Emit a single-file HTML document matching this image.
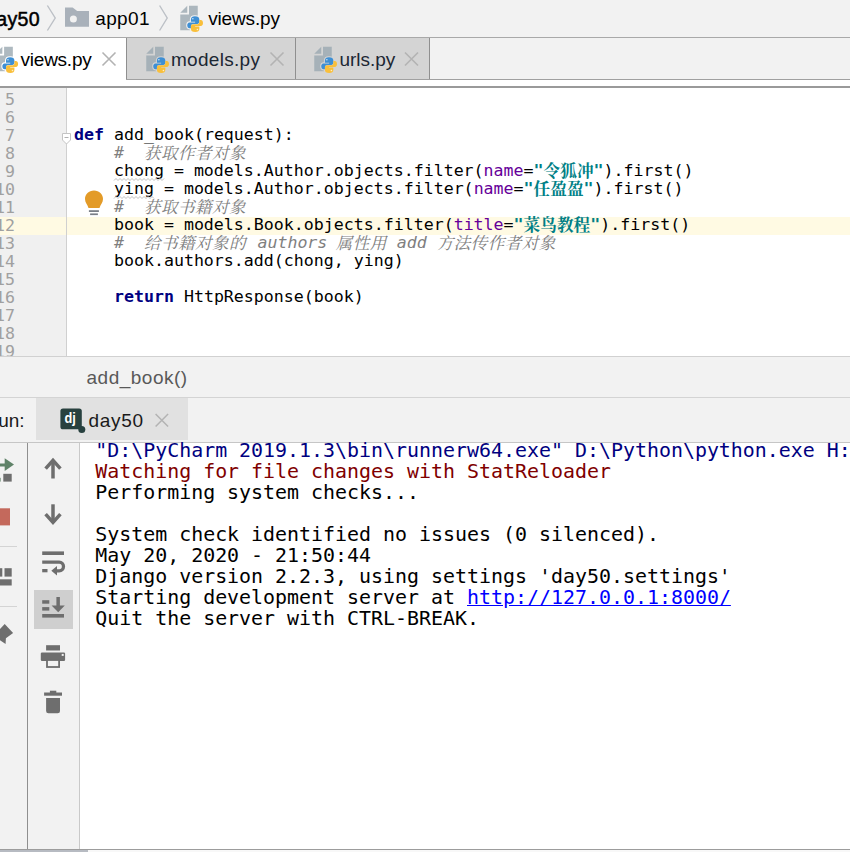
<!DOCTYPE html>
<html lang="zh">
<head>
<meta charset="utf-8">
<title>PyCharm - views.py</title>
<style>
html,body{margin:0;padding:0;}
body{width:850px;height:852px;overflow:hidden;background:#fff;position:relative;font-family:"Liberation Sans","Noto Sans CJK SC",sans-serif;color:#000;}
.abs{position:absolute;}
#nav{left:0;top:0;width:850px;height:37px;background:#f2f2f2;}
#navline{left:0;top:37px;width:850px;height:1px;background:#a9a9a9;}
.ui{font-family:"Liberation Sans","Noto Sans CJK SC",sans-serif;font-size:19px;white-space:pre;line-height:22px;color:#000;}
#tabs{left:0;top:38px;width:850px;height:48px;background:#fff;}
.tab{position:absolute;top:0;height:42px;background:#d4d4d4;border-right:1px solid #8f8f8f;border-bottom:1px solid #8f8f8f;box-sizing:border-box;}
#tabline{left:0;top:86px;width:850px;height:2px;background:#9a9a9a;}
#gutter{left:0;top:88px;width:66px;height:268px;background:#f0f0f0;border-right:1px solid #d0d0d0;}
#editor{left:67px;top:88px;width:783px;height:268px;background:#fff;}
.ln{position:absolute;left:-5px;margin-top:1.3px;width:20px;text-align:right;font-family:"DejaVu Sans Mono","Liberation Mono",monospace;font-size:16.6px;line-height:18px;height:18px;color:#a0a0a0;}
.cl{position:absolute;left:74px;height:18px;line-height:18px;font-family:"DejaVu Sans Mono","Noto Sans CJK SC",monospace;font-size:16.6px;white-space:pre;color:#000;}
.kw{color:#000080;font-weight:bold;}
.cm{color:#808080;font-style:italic;}
.cm .zh{font-family:"Noto Serif CJK SC","Noto Sans CJK SC",serif;font-style:italic;font-size:16.6px;letter-spacing:0.4px;line-height:0;position:relative;top:0.8px;}
.st{color:#007f86;font-weight:bold;}
.st .zh{font-family:"Noto Serif CJK SC","Noto Sans CJK SC",serif;font-weight:bold;font-size:16.67px;line-height:0;position:relative;top:0.5px;}
.kwarg{color:#660099;}
#caretrow{left:0;top:217px;width:850px;height:18px;background:#fffae3;}
#crumb{left:0;top:356px;width:850px;height:41px;background:#f2f2f2;border-top:1px solid #d1d1d1;box-sizing:border-box;}
#runhdr{left:0;top:397px;width:850px;height:46px;background:#f2f2f2;border-top:1px solid #d4d4d4;border-bottom:1px solid #c6c6c6;box-sizing:border-box;}
#runtab{left:36px;top:398px;width:152px;height:42.4px;background:#e1e1e1;}
#lefttb{left:0;top:443px;width:27px;height:407px;background:#f2f2f2;border-right:1px solid #8f8f8f;}
#midtb{left:28px;top:443px;width:51px;height:407px;background:#f2f2f2;border-right:1px solid #c9c9c9;}
#console{left:80px;top:443px;width:770px;height:407px;background:#fff;}
.co{position:absolute;left:95.2px;height:21px;line-height:21px;font-family:"DejaVu Sans Mono","Liberation Mono",monospace;font-size:19.93px;white-space:pre;color:#000;}
#bottomline{left:0;top:849px;width:850px;height:1px;background:#9c9c9c;}
#bottomband{left:0;top:850px;width:850px;height:2px;background:linear-gradient(to right,#b7bbc2 0,#b7bbc2 88px,#f8f8f8 88px);}
</style>
</head>
<body>
<!-- navigation bar -->
<div id="nav" class="abs"></div>
<div id="navline" class="abs"></div>
<div id="t_day50" class="abs ui" style="left:-15.1px;top:8px;font-weight:normal;-webkit-text-stroke:0.5px #000;font-size:19.6px;letter-spacing:0.35px;">day50</div>
<div id="t_app01" class="abs ui" style="left:95.2px;top:8px;letter-spacing:0.4px;">app01</div>
<div id="t_views1" class="abs ui" style="left:208.2px;top:8px;letter-spacing:-0.15px;">views.py</div>

<!-- editor tabs -->
<div id="tabs" class="abs">
  <div class="abs" style="left:126px;top:0;width:724px;height:41px;background:#f2f2f2;"></div>
  <div class="tab" style="left:126px;width:170px;border-left:1px solid #8f8f8f;"></div>
  <div class="tab" style="left:296px;width:134px;"></div>
  <div class="abs" style="left:126px;top:41px;width:724px;height:1px;background:#a0a0a0;"></div>
</div>
<div id="tabline" class="abs"></div>
<div id="t_tab1" class="abs ui" style="left:20.6px;top:49px;letter-spacing:-0.25px;">views.py</div>
<div id="t_tab2" class="abs ui" style="left:171px;top:49px;letter-spacing:0.29px;color:#1c2733;">models.py</div>
<div id="t_tab3" class="abs ui" style="left:339.4px;top:49px;color:#1c2733;">urls.py</div>

<!-- editor -->
<div id="gutter" class="abs"></div>
<div id="editor" class="abs"></div>
<div id="caretrow" class="abs"></div>
<div class="abs" style="left:66px;top:217px;width:1px;height:18px;background:#d0d0d0;"></div>

<div class="ln" style="top:90px;">5</div>
<div class="ln" style="top:108px;">6</div>
<div class="ln" style="top:126px;">7</div>
<div class="ln" style="top:144px;">8</div>
<div class="ln" style="top:162px;">9</div>
<div class="ln" style="top:180px;">10</div>
<div class="ln" style="top:198px;">11</div>
<div class="ln" style="top:216px;">12</div>
<div class="ln" style="top:234px;">13</div>
<div class="ln" style="top:252px;">14</div>
<div class="ln" style="top:270px;">15</div>
<div class="ln" style="top:288px;">16</div>
<div class="ln" style="top:306px;">17</div>
<div class="ln" style="top:324px;">18</div>
<div class="ln" style="top:342px;height:14px;overflow:hidden;">19</div>

<div class="cl" style="top:126px;"><span class="kw">def</span> add_book(request):</div>
<div class="cl" style="top:144px;">    <span class="cm">#  <span class="zh">获取作者对象</span></span></div>
<div class="cl" style="top:162px;">    chong = models.Author.objects.filter(<span class="kwarg">name</span>=<span class="st">"<span class="zh">令狐冲</span>"</span>).first()</div>
<div class="cl" style="top:180px;">    ying = models.Author.objects.filter(<span class="kwarg">name</span>=<span class="st">"<span class="zh">任盈盈</span>"</span>).first()</div>
<div class="cl" style="top:198px;">    <span class="cm">#  <span class="zh">获取书籍对象</span></span></div>
<div class="cl" style="top:216px;">    book = models.Book.objects.filter(<span class="kwarg">title</span>=<span class="st">"<span class="zh">菜鸟教程</span>"</span>).first()</div>
<div class="cl" style="top:234px;">    <span class="cm">#  <span class="zh">给书籍对象的</span> <span style="margin-left:1.5px;margin-right:-1.5px;">authors</span> <span class="zh">属性用</span> add <span class="zh">方法传作者对象</span></span></div>
<div class="cl" style="top:252px;">    book.authors.add(chong, ying)</div>
<div class="cl" style="top:288px;">    <span class="kw">return</span> HttpResponse(book)</div>

<!-- editor breadcrumb -->
<div id="crumb" class="abs"></div>
<div id="t_crumb" class="abs ui" style="left:86.5px;top:367px;letter-spacing:0.5px;color:#595959;">add_book()</div>

<!-- run tool window -->
<div id="runhdr" class="abs"></div>
<div id="runtab" class="abs"></div>
<div id="t_run" class="abs ui" style="left:-15.5px;top:410px;color:#1a1a1a;">Run:</div>
<div id="t_runtab" class="abs ui" style="left:88.5px;top:410px;letter-spacing:0.7px;color:#1a1a1a;">day50</div>

<div id="lefttb" class="abs"></div>
<div id="midtb" class="abs"></div>
<div id="console" class="abs"></div>

<div class="co" style="top:440px;color:#000080;">"D:\PyCharm 2019.1.3\bin\runnerw64.exe" D:\Python\python.exe H:/day50/manage.py runserver 8000</div>
<div class="co" style="top:461px;color:#7f0000;">Watching for file changes with StatReloader</div>
<div class="co" style="top:482px;">Performing system checks...</div>
<div class="co" style="top:524px;">System check identified no issues (0 silenced).</div>
<div class="co" style="top:545px;">May 20, 2020 - 21:50:44</div>
<div class="co" style="top:566px;">Django version 2.2.3, using settings 'day50.settings'</div>
<div class="co" style="top:587px;">Starting development server at <span style="color:#0000ff;text-decoration:underline;">http://127.0.0.1:8000/</span></div>
<div class="co" style="top:608px;">Quit the server with CTRL-BREAK.</div>


<!-- icon overlay -->
<svg class="abs" style="left:0;top:0;pointer-events:none;" width="850" height="852" viewBox="0 0 850 852">
<defs>
  <g id="pyfile">
    <polygon points="7,1 3,5 7,5" fill="#9aa7b0" fill-opacity="0.8"/>
    <path d="M8,1 H13 V15 H3 V6 H8 Z" fill="#9aa7b0" fill-opacity="0.8"/>
    <g transform="translate(7,7)">
      <g stroke="currentColor" stroke-width="1.2" stroke-linejoin="round" fill="currentColor">
        <path d="M4.4,0 C2.9,0 2.1,0.7 2.1,1.9 V3.1 H4.5 V3.5 H1.3 C0.4,3.5 0,4.3 0,5.2 C0,6.2 0.5,6.9 1.3,6.9 H2.1 V5.6 C2.1,4.8 2.8,4.4 3.5,4.4 H5.7 C6.4,4.4 6.9,3.9 6.9,3.2 V1.9 C6.9,0.7 6.1,0 4.4,0 Z"/>
        <path transform="rotate(180 4.5 4.5)" d="M4.4,0 C2.9,0 2.1,0.7 2.1,1.9 V3.1 H4.5 V3.5 H1.3 C0.4,3.5 0,4.3 0,5.2 C0,6.2 0.5,6.9 1.3,6.9 H2.1 V5.6 C2.1,4.8 2.8,4.4 3.5,4.4 H5.7 C6.4,4.4 6.9,3.9 6.9,3.2 V1.9 C6.9,0.7 6.1,0 4.4,0 Z"/>
      </g>
      <path fill="#3e8fd4" d="M4.4,0 C2.9,0 2.1,0.7 2.1,1.9 V3.1 H4.5 V3.5 H1.3 C0.4,3.5 0,4.3 0,5.2 C0,6.2 0.5,6.9 1.3,6.9 H2.1 V5.6 C2.1,4.8 2.8,4.4 3.5,4.4 H5.7 C6.4,4.4 6.9,3.9 6.9,3.2 V1.9 C6.9,0.7 6.1,0 4.4,0 Z"/>
      <path fill="#f9bf3b" transform="rotate(180 4.5 4.5)" d="M4.4,0 C2.9,0 2.1,0.7 2.1,1.9 V3.1 H4.5 V3.5 H1.3 C0.4,3.5 0,4.3 0,5.2 C0,6.2 0.5,6.9 1.3,6.9 H2.1 V5.6 C2.1,4.8 2.8,4.4 3.5,4.4 H5.7 C6.4,4.4 6.9,3.9 6.9,3.2 V1.9 C6.9,0.7 6.1,0 4.4,0 Z"/>
    </g>
    <circle cx="10.2" cy="8.4" r="0.45" fill="#cfe3f5"/>
    <circle cx="12.8" cy="14.6" r="0.45" fill="#fdeec4"/>
  </g>
  <g id="closex" stroke="#b3b3b3" stroke-width="1.6" fill="none">
    <path d="M0,0 L13,13 M13,0 L0,13"/>
  </g>
</defs>

<!-- nav bar -->
<path d="M47.4,5.5 L55.2,18 L47.4,30.5" fill="none" stroke="#bcc0c6" stroke-width="1.4"/>
<path d="M159.6,5.5 L167.2,18 L159.6,30.5" fill="none" stroke="#bcc0c6" stroke-width="1.4"/>
<path d="M65,7.4 H72.6 L77.2,10.9 H89 V26.8 H65 Z" fill="#a9b1ba"/>
<circle cx="73.4" cy="18.9" r="3.5" fill="#f2f2f2"/>
<use href="#pyfile" transform="translate(175,4) scale(1.75)" style="color:#f2f2f2"/>

<!-- tabs -->
<use href="#pyfile" transform="translate(-9.9,45) scale(1.75)" style="color:#ffffff"/>
<use href="#pyfile" transform="translate(141,45) scale(1.75)" style="color:#d4d4d4"/>
<use href="#pyfile" transform="translate(309,45) scale(1.75)" style="color:#d4d4d4"/>
<use href="#closex" transform="translate(102.5,52.5)"/>
<use href="#closex" transform="translate(270.5,52.5)"/>
<use href="#closex" transform="translate(405,52.5)"/>

<!-- fold marker -->
<path d="M62.5,133.5 H70.5 V140 L66.5,144 L62.5,140 Z" fill="#ffffff" stroke="#c4c4c4" stroke-width="1"/>
<path d="M64.5,137.5 H68.5" stroke="#b0b0b0" stroke-width="1"/>

<!-- weak warnings -->
<polyline points="114,180.5 116,178.5 118,180.5 120,178.5 122,180.5 124,178.5 126,180.5 128,178.5 130,180.5 132,178.5 134,180.5 136,178.5 138,180.5 140,178.5 142,180.5 144,178.5 146,180.5 148,178.5 150,180.5 152,178.5 154,180.5 156,178.5 158,180.5 160,178.5 162,180.5 164,178.5" fill="none" stroke="#c2c2c2" stroke-width="1"/>
<polyline points="114,198.5 116,196.5 118,198.5 120,196.5 122,198.5 124,196.5 126,198.5 128,196.5 130,198.5 132,196.5 134,198.5 136,196.5 138,198.5 140,196.5 142,198.5 144,196.5 146,198.5 148,196.5 150,198.5 152,196.5 154,198.5" fill="none" stroke="#c2c2c2" stroke-width="1"/>
<!-- bulb -->
<path d="M94,190.6 C99.2,190.6 103,194.4 103,199 C103,202.6 100.6,204.4 99.5,207.9 H88.5 C87.4,204.4 85,202.6 85,199 C85,194.4 88.8,190.6 94,190.6 Z" fill="#e39b28"/>
<rect x="88.9" y="210.2" width="10" height="1.8" fill="#7a7f87"/>
<rect x="90.1" y="213.4" width="7.8" height="1.7" fill="#7a7f87"/>

<!-- run tab -->
<rect x="60.4" y="408.4" width="21.4" height="20.9" rx="2.6" fill="#28413f"/>
<circle cx="81.8" cy="429.5" r="3.5" fill="#28413f"/>
<text x="64.6" y="422.7" textLength="11.3" lengthAdjust="spacingAndGlyphs" font-family="Liberation Sans, sans-serif" font-weight="bold" font-size="14.8" fill="#ffffff">dj</text>
<use href="#closex" transform="translate(155.6,414) scale(0.96)"/>

<!-- left toolbar -->
<g fill="#5f8268">
  <rect x="-2" y="463.5" width="7.5" height="3"/>
  <polygon points="4.7,458.2 14,464.6 4.7,471"/>
  <rect x="-2" y="477.8" width="2.6" height="3.8"/>
</g>
<rect x="3.3" y="473.8" width="8.4" height="7.8" fill="#6e6e6e"/>
<rect x="-2" y="508.3" width="12" height="17.1" fill="#c4695c"/>
<rect x="0" y="546" width="17" height="1" fill="#d4d4d4"/>
<rect x="0" y="606" width="17" height="1" fill="#d4d4d4"/>
<g fill="#6e6e6e">
  <rect x="-2" y="568.2" width="4.3" height="8.4"/>
  <rect x="4.5" y="568.2" width="7.2" height="8.4"/>
  <rect x="-2" y="579.3" width="13.7" height="6.2"/>
  <polygon points="4.7,624.1 13.1,632.9 5.9,638.2 5.6,644 -1,639.5 -1,630"/>
</g>

<!-- middle toolbar -->
<g fill="none" stroke="#6e6e6e" stroke-width="3.5">
  <path d="M53,478.5 V460"/>
  <path d="M45.6,468.6 L53,460.4 L60.4,468.6" stroke-linejoin="miter"/>
  <path d="M53,504.3 V522.5"/>
  <path d="M45.6,514.2 L53,522.4 L60.4,514.2" stroke-linejoin="miter"/>
</g>
<!-- soft wrap -->
<g fill="#6e6e6e">
  <rect x="42.2" y="551.4" width="21.8" height="3.6"/>
  <rect x="42.2" y="569" width="5.3" height="3.3"/>
  <polygon points="51.3,570.8 57,566 57,575.4"/>
</g>
<path d="M42.2,562.2 H59.2 A4.3,4.3 0 0 1 59.2,570.8 H56.5" fill="none" stroke="#6e6e6e" stroke-width="3.3"/>
<!-- scroll to end -->
<rect x="34" y="590" width="39" height="39" fill="#cfcfcf"/>
<g fill="#6e6e6e">
  <rect x="42.2" y="600.2" width="7.1" height="3.5"/>
  <rect x="42.2" y="607.1" width="7.1" height="3.5"/>
  <rect x="42.2" y="614" width="21.8" height="3.6"/>
  <rect x="56.4" y="597" width="3.5" height="9.5"/>
  <polygon points="51.6,605.5 64.8,605.5 58.2,612.2"/>
</g>
<!-- print -->
<g fill="#6e6e6e">
  <rect x="46.1" y="645.2" width="13.9" height="5.3"/>
  <rect x="40.8" y="652.6" width="24.3" height="8.3" rx="1.2"/>
</g>
<rect x="47" y="660" width="12.1" height="7" fill="#f2f2f2" stroke="#6e6e6e" stroke-width="1.8"/>
<rect x="61.7" y="653.9" width="2" height="2" fill="#f2f2f2"/>
<!-- trash -->
<g fill="#6e6e6e">
  <rect x="49.9" y="690.7" width="6.4" height="2.5"/>
  <rect x="44.1" y="692.5" width="17.9" height="3.2"/>
  <path d="M46.1,698 H60 V711 Q60,713.3 57.7,713.3 H48.4 Q46.1,713.3 46.1,711 Z"/>
</g>
</svg>

<div id="bottomline" class="abs"></div>
<div id="bottomband" class="abs"></div>
</body>
</html>
